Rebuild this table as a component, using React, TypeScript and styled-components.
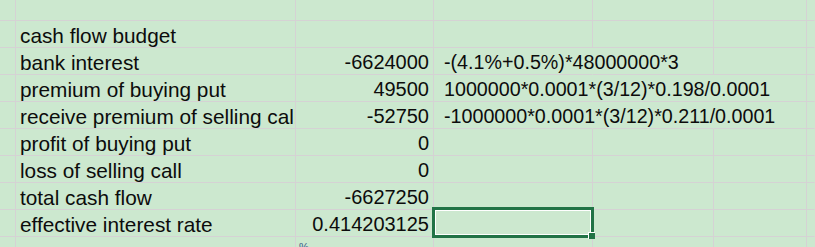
import styled, { createGlobalStyle } from 'styled-components';

const GRID = '#d5d2d4';
const SHEET_BG = '#cce8cf';
const SELECT = '#217346';

type SheetRow = {
  label?: string;
  value?: string;
  formula?: string;
  // how many cells the formula text runs across
  span?: number;
  selected?: boolean;
};

const rows: SheetRow[] = [
  { label: 'cash flow budget' },
  {
    label: 'bank interest',
    value: '-6624000',
    formula: '-(4.1%+0.5%)*48000000*3',
    span: 1,
  },
  {
    label: 'premium of buying put',
    value: '49500',
    formula: '1000000*0.0001*(3/12)*0.198/0.0001',
    span: 2,
  },
  {
    label: 'receive premium of selling call',
    value: '-52750',
    formula: '-1000000*0.0001*(3/12)*0.211/0.0001',
    span: 2,
  },
  { label: 'profit of buying put', value: '0' },
  { label: 'loss of selling call', value: '0' },
  { label: 'total cash flow', value: '-6627250' },
  { label: 'effective interest rate', value: '0.414203125', selected: true },
];

const GlobalStyle = createGlobalStyle`
  html, body {
    margin: 0;
    padding: 0;
    background: ${SHEET_BG};
    overflow: hidden;
  }
  body {
    font-family: 'Liberation Sans', Arial, sans-serif;
    color: #0c0c0c;
  }
`;

const App = () => {
  return (
    <>
      <GlobalStyle />
      <Sheet>
        {/* partial row at the top */}
        <Cell />
        <Cell />
        <Cell />
        <Cell />
        <Cell />
        <Cell />
        <Cell $last />

        {rows.map((row, i) => {
          const span = row.span ?? 0;
          return [
            <Cell key={`${i}-h`} />,
            <LabelCell key={`${i}-a`}>{row.label}</LabelCell>,
            <NumberCell key={`${i}-b`}>{row.value}</NumberCell>,
            <FormulaCell key={`${i}-c`} $open={span >= 1}>
              {row.formula}
              {row.selected && (
                <Selection>
                  <FillHandle />
                </Selection>
              )}
            </FormulaCell>,
            <Cell key={`${i}-d`} $open={span >= 2} />,
            <Cell key={`${i}-e`} />,
            <Cell key={`${i}-f`} $last />,
          ];
        })}

        {/* partial row at the bottom */}
        <Cell $bottom />
        <Cell $bottom />
        <Cell $bottom>
          <Hint>%</Hint>
        </Cell>
        <Cell $bottom />
        <Cell $bottom />
        <Cell $bottom />
        <Cell $bottom $last />
      </Sheet>
    </>
  );
};

export default App;

const Sheet = styled.div`
  display: grid;
  grid-template-columns: 16px 280px 138px 159px 121px 93px 1fr;
  grid-template-rows: 21px repeat(8, 27px) 10px;
  width: 815px;
  height: 247px;
  font-size: 20px;
`;

const Cell = styled.div<{ $open?: boolean; $last?: boolean; $bottom?: boolean }>`
  position: relative;
  box-sizing: border-box;
  min-width: 0;
  border-right: 1px solid ${(p) => (p.$open || p.$last ? 'transparent' : GRID)};
  border-bottom: ${(p) => (p.$bottom ? 'none' : `1px solid ${GRID}`)};
  display: flex;
  align-items: flex-end;
  white-space: nowrap;
  line-height: 23px;
`;

const LabelCell = styled(Cell)`
  overflow: hidden;
  padding-left: 4px;
  font-size: 20.8px;
`;

const NumberCell = styled(Cell)`
  justify-content: flex-end;
  padding-right: 4px;
`;

const FormulaCell = styled(Cell)`
  overflow: visible;
  padding-left: 10px;
  font-size: 19.7px;
  z-index: 1;
`;

const Selection = styled.div`
  position: absolute;
  top: -3px;
  left: -2px;
  width: 162px;
  height: 31px;
  box-sizing: border-box;
  border: 3px solid ${SELECT};
  box-shadow: inset 0 0 0 1px #fff;
  pointer-events: none;
`;

const FillHandle = styled.div`
  position: absolute;
  right: -4px;
  bottom: -4px;
  width: 6px;
  height: 6px;
  background: ${SELECT};
  border: 1px solid #fff;
  border-right: none;
  border-bottom: none;
`;

const Hint = styled.span`
  position: absolute;
  left: 3px;
  top: 5px;
  font-size: 11px;
  line-height: 11px;
  color: #3a5a8a;
`;
